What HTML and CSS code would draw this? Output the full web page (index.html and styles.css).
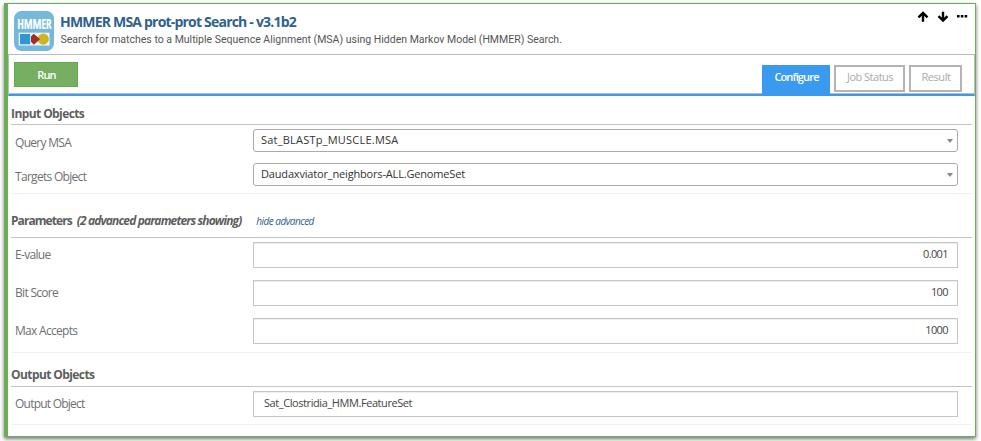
FILE: index.html
```html
<!DOCTYPE html>
<html lang="en">
<head>
<meta charset="utf-8">
<title>HMMER MSA prot-prot Search</title>
<link rel="stylesheet" href="styles.css">
</head>
<body>
<main class="card">
  <header class="header">
    <svg class="logo" width="40" height="40" viewBox="0 0 40 40">
      <rect width="40" height="40" rx="7.5" fill="#74b9d9"/>
      <text class="logo-text" transform="translate(20.4 18.2) scale(.8 1)" text-anchor="middle">HMMER</text>
      <rect x="4.7" y="21.7" width="30.8" height="12.8" fill="#eef7fb"/>
      <rect x="6" y="23" width="10.2" height="10.3" fill="#2f98cf"/>
      <circle cx="29.3" cy="28.1" r="5.6" fill="#cfb422"/>
      <path d="M17 25.5 19.8 22.7 26 28.2 19.8 33.7 17 30.8z" fill="#a62b1c"/>
    </svg>
    <div class="heading">
      <h1 class="title">HMMER MSA prot-prot Search - v3.1b2</h1>
      <p class="subtitle">Search for matches to a Multiple Sequence Alignment (MSA) using Hidden Markov Model (HMMER) Search.</p>
    </div>
    <div class="actions">
      <svg width="12" height="12" viewBox="0 0 12 12"><path d="M6 10.8V2.5M1.5 6.4 6 1.9 10.5 6.4" fill="none" stroke="#000" stroke-width="2.4"/></svg>
      <svg width="12" height="12" viewBox="0 0 12 12"><path d="M6 .8V9M1.5 5.1 6 9.6 10.5 5.1" fill="none" stroke="#000" stroke-width="2.4"/></svg>
      <svg width="12" height="12" viewBox="0 0 12 12"><path d="M1 4h2.6v2.6H1zM4.8 4h2.6v2.6H4.8zM8.6 4h2.6v2.6H8.6z"/></svg>
    </div>
  </header>
  <div class="toolbar">
    <button class="run">Run</button>
    <nav class="tabs">
      <a class="tab active">Configure</a>
      <a class="tab status">Job Status</a>
      <a class="tab result">Result</a>
    </nav>
  </div>
  <section class="group inputs">
    <h2 class="group-title">Input Objects</h2>
    <div class="row"><label class="label">Query MSA</label><div class="select"><span class="value-msa">Sat_BLASTp_MUSCLE.MSA</span></div></div>
    <div class="row"><label class="label">Targets Object</label><div class="select"><span class="value-genome">Daudaxviator_neighbors-ALL.GenomeSet</span></div></div>
  </section>
  <section class="group params">
    <h2 class="group-title"><span class="name">Parameters</span><em class="note">(2 advanced parameters showing)</em><a class="toggle">hide advanced</a></h2>
    <div class="row"><label class="label">E-value</label><div class="field number">0.001</div></div>
    <div class="row"><label class="label">Bit Score</label><div class="field number">100</div></div>
    <div class="row"><label class="label">Max Accepts</label><div class="field number">1000</div></div>
  </section>
  <section class="group outputs">
    <h2 class="group-title">Output Objects</h2>
    <div class="row"><label class="label output">Output Object</label><div class="field">Sat_Clostridia_HMM.FeatureSet</div></div>
  </section>
</main>
</body>
</html>
```
FILE: styles.css
```css
* { box-sizing: border-box; }
html { height: 441px; }
body { margin: 0; padding: 3px 0 0 4px; height: 441px; background: #fff; font-family: "Open Sans", "Noto Sans", sans-serif; color: #666; }
h1, h2, p { margin: 0; }

.card {
  width: 972px;
  height: 434px;
  border: 1px solid #6aaf58;
  border-left-width: 4px;
  background: #fff;
  box-shadow: 0 2px 4px rgba(0, 0, 0, .55);
}

.header { display: flex; height: 50px; padding: 7px 7px 0 6px; }
.logo-text { font: bold 14.5px "Open Sans", sans-serif; font-stretch: 75%; fill: #fff; letter-spacing: -.3px; }
.heading { margin-left: 6px; flex: 1; }
.title { font-size: 14px; line-height: 18px; margin-top: 2px; letter-spacing: -.8px; color: #2e618d; }
.subtitle { font: 10.5px/14px Roboto, sans-serif; margin: 2px 0 0 .5px; color: #555; }
.actions { display: flex; gap: 7.5px; height: 12px; }

.toolbar {
  display: flex;
  justify-content: space-between;
  height: 42px;
  border: 1px solid #bbb;
  border-bottom: 2px solid #3a9af0;
  padding: 7px 12px 0 5px;
  box-shadow: inset 0 -1px #bbb;
}
.run {
  width: 64px;
  height: 25px;
  padding: 0 0 1px 1px;
  border: 1px solid #63a950;
  background: #76ae62;
  color: #fff;
  font: 600 11px "Open Sans", sans-serif;
  letter-spacing: -.8px;
}
.tabs { display: flex; gap: 4px; padding-top: 3px; }
.tab { height: 27px; border: 2px solid #b4b4b4; padding-left: 1px; color: #aaa; font-size: 11px; line-height: 20px; text-align: center; }
.tab.active { width: 68px; height: 31px; border-color: #3a9af0; background: #3a9af0; color: #fff; font-weight: 600; letter-spacing: -.85px; }
.status { width: 71px; letter-spacing: -.5px; }
.result { width: 53px; letter-spacing: -.45px; }

.group { margin: 0 3px; border-bottom: 1px solid #f1f1f1; }
.inputs { height: 98px; }
.params { height: 159px; }
.outputs { height: 72px; }
.group-title { display: flex; align-items: center; border-bottom: 1px solid #c4c4c4; font-size: 12px; line-height: 16px; letter-spacing: -.59px; color: #5e5e5e; }
.inputs .group-title { height: 29px; padding-top: 7px; }
.params .group-title { height: 44px; padding-top: 11px; }
.outputs .group-title { height: 34px; padding-top: 10px; }
.name { letter-spacing: -.93px; }
.note { margin-left: 5px; letter-spacing: -.87px; }
.toggle { margin-left: 15px; font-size: 10px; font-weight: normal; font-style: italic; letter-spacing: -.53px; color: #2e618d; }

.row { display: flex; align-items: center; padding: 0 14px 0 4px; }
.inputs .row { height: 34px; padding-bottom: 3px; }
.params .row { height: 38px; padding-bottom: 4px; }
.outputs .row { height: 34px; }
.label { width: 238px; font-size: 12px; line-height: 16px; letter-spacing: -.7px; color: #707070; }
.inputs .label { padding-top: 4px; }
.output { letter-spacing: -.77px; }

.select {
  position: relative;
  flex: 1;
  height: 23px;
  border: 1px solid #aaa;
  border-radius: 3px;
  padding-left: 7px;
  font-size: 11px;
  line-height: 20px;
  color: #333;
}
.select::after {
  content: "";
  position: absolute;
  right: 4px;
  top: 9px;
  border: 3.5px solid transparent;
  border-top: 4.5px solid #888;
  border-bottom: 0;
}
.value-msa { letter-spacing: .22px; }
.value-genome { letter-spacing: -.17px; }
.field {
  flex: 1;
  height: 26px;
  border: 1px solid #c6c6c6;
  box-shadow: inset 0 1px 1px rgba(0, 0, 0, .07);
  padding: 0 10px;
  font-size: 11px;
  line-height: 22px;
  letter-spacing: -.42px;
  color: #444;
}
.number { padding-right: 9px; text-align: right; letter-spacing: -.6px; }
```
